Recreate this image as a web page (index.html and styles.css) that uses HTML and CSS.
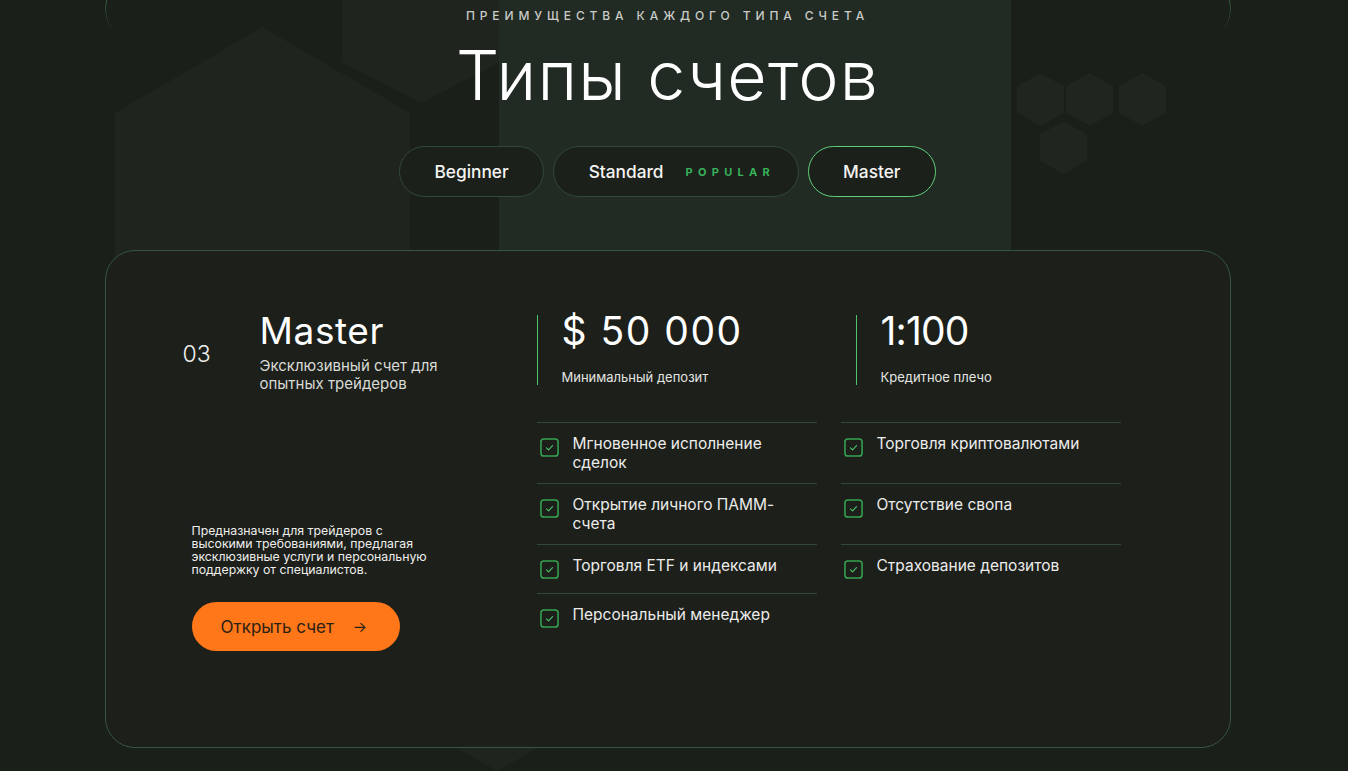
FILE: index.html
```html
<!DOCTYPE html>
<html lang="ru">
<head>
<meta charset="utf-8">
<title>Типы счетов</title>
<link rel="stylesheet" href="styles.css">
</head>
<body>
<div class="page">
  <div class="bg" aria-hidden="true">
    <div class="bg-frame"></div>
    <div class="shape house"></div>
    <div class="shape hex-top"></div>
    <div class="shape column"></div>
    <div class="shape hex hx1"></div>
    <div class="shape hex hx2"></div>
    <div class="shape hex hx3"></div>
    <div class="shape hex hx4"></div>
    <div class="shape hex-bottom"></div>
  </div>

  <section class="accounts">
    <p class="eyebrow">ПРЕИМУЩЕСТВА КАЖДОГО ТИПА СЧЕТА</p>
    <h1 class="title">Типы счетов</h1>

    <div class="tabs">
      <button class="tab">Beginner</button>
      <button class="tab tab-standard">Standard <span class="badge">POPULAR</span></button>
      <button class="tab active">Master</button>
    </div>

    <div class="card">
      <div class="card-left">
        <div class="plan-head">
          <span class="num">03</span>
          <div class="plan-name">
            <h2>Master</h2>
            <p>Эксклюзивный счет для опытных трейдеров</p>
          </div>
        </div>
        <div class="plan-foot">
          <p class="desc">Предназначен для трейдеров с высокими требованиями, предлагая эксклюзивные услуги и персональную поддержку от специалистов.</p>
          <a class="btn" href="#">Открыть счет <span class="arrow">→</span></a>
        </div>
      </div>

      <div class="card-right">
        <div class="stats">
          <div class="stat">
            <div class="stat-value stat-wide">$ 50 000</div>
            <div class="stat-label">Минимальный депозит</div>
          </div>
          <div class="stat">
            <div class="stat-value stat-tight">1:100</div>
            <div class="stat-label">Кредитное плечо</div>
          </div>
        </div>

        <ul class="features">
          <li><svg class="check" viewBox="0 0 20 20"><rect x="1" y="1" width="18" height="18" rx="3"/><path d="M6.8 10.3 L9 12.5 L13.2 8"/></svg><span>Мгновенное исполнение сделок</span></li>
          <li><svg class="check" viewBox="0 0 20 20"><rect x="1" y="1" width="18" height="18" rx="3"/><path d="M6.8 10.3 L9 12.5 L13.2 8"/></svg><span>Торговля криптовалютами</span></li>
          <li><svg class="check" viewBox="0 0 20 20"><rect x="1" y="1" width="18" height="18" rx="3"/><path d="M6.8 10.3 L9 12.5 L13.2 8"/></svg><span>Открытие личного ПАММ-счета</span></li>
          <li><svg class="check" viewBox="0 0 20 20"><rect x="1" y="1" width="18" height="18" rx="3"/><path d="M6.8 10.3 L9 12.5 L13.2 8"/></svg><span>Отсутствие свопа</span></li>
          <li><svg class="check" viewBox="0 0 20 20"><rect x="1" y="1" width="18" height="18" rx="3"/><path d="M6.8 10.3 L9 12.5 L13.2 8"/></svg><span>Торговля ETF и индексами</span></li>
          <li><svg class="check" viewBox="0 0 20 20"><rect x="1" y="1" width="18" height="18" rx="3"/><path d="M6.8 10.3 L9 12.5 L13.2 8"/></svg><span>Страхование депозитов</span></li>
          <li><svg class="check" viewBox="0 0 20 20"><rect x="1" y="1" width="18" height="18" rx="3"/><path d="M6.8 10.3 L9 12.5 L13.2 8"/></svg><span>Персональный менеджер</span></li>
        </ul>
      </div>
    </div>
  </section>
</div>
</body>
</html>
```

FILE: styles.css
```css
* { box-sizing: border-box; }

html, body {
  margin: 0;
  padding: 0;
  background: #1b1f19;
}

body {
  font-family: "Inter", "Noto Sans", "DejaVu Sans", sans-serif;
  color: #f2f2f0;
  overflow: hidden;
}

.page {
  position: relative;
  width: 1348px;
  height: 771px;
  overflow: hidden;
}

/* ---------- decorative background ---------- */
.bg {
  position: absolute;
  inset: 0;
  z-index: 0;
}

.shape {
  position: absolute;
  background: #1f241e;
}

.bg-frame {
  position: absolute;
  left: 105px;
  top: -26px;
  width: 1126px;
  height: 70px;
  border: 1px solid #3a6e48;
  border-radius: 40px;
  -webkit-mask-image: linear-gradient(to bottom, #000 0%, #000 35%, transparent 85%);
  mask-image: linear-gradient(to bottom, #000 0%, #000 35%, transparent 85%);
}

.house {
  left: 115px;
  top: 27px;
  width: 295px;
  height: 260px;
  clip-path: polygon(50% 0, 100% 33%, 100% 100%, 0 100%, 0 33%);
}

.hex-top {
  left: 342px;
  top: -60px;
  width: 158px;
  height: 163px;
  clip-path: polygon(50% 0, 100% 25%, 100% 75%, 50% 100%, 0 75%, 0 25%);
}

.column {
  left: 499px;
  top: 0;
  width: 512px;
  height: 300px;
  background: #222a24;
}

.hex {
  width: 47px;
  height: 53px;
  clip-path: polygon(50% 0, 100% 25%, 100% 75%, 50% 100%, 0 75%, 0 25%);
  background: #20251f;
}
.hx1 { left: 1017px; top: 73px; }
.hx2 { left: 1066px; top: 73px; }
.hx3 { left: 1119px; top: 73px; }
.hx4 { left: 1040px; top: 121px; }

.hex-bottom {
  left: 456px;
  top: 700px;
  width: 82px;
  height: 71px;
  clip-path: polygon(0 0, 100% 0, 100% 67.6%, 50% 100%, 0 67.6%);
}

/* ---------- content ---------- */
.accounts {
  position: relative;
  z-index: 1;
  width: 1335px;
  display: flex;
  flex-direction: column;
  align-items: center;
  padding-top: 8px;
}

.eyebrow {
  margin: 0;
  font-size: 12px;
  line-height: 16px;
  letter-spacing: 4.9px;
  color: #c9ccc7;
  font-weight: 500;
}

.title {
  margin: 17px 0 0;
  font-size: 68px;
  line-height: 68px;
  font-weight: 300;
  color: #ffffff;
  letter-spacing: 1.2px;
}

.tabs {
  display: flex;
  gap: 9px;
  margin-top: 37px;
}

.tab {
  height: 51px;
  padding: 0 34px;
  border: 1px solid #2f4a37;
  border-radius: 26px;
  background: #1c201b;
  color: #f4f4f2;
  font-family: inherit;
  font-size: 17.3px;
  font-weight: 500;
  display: flex;
  align-items: center;
  gap: 22px;
  cursor: pointer;
}

.tab-standard { padding-right: 23px; padding-left: 35px; }

.tab.active {
  border-color: #5fcf7c;
}

.badge {
  font-size: 11px;
  font-weight: 700;
  letter-spacing: 5.3px;
  color: #37b15a;
}

/* ---------- card ---------- */
.card {
  margin-top: 53px;
  width: 1126px;
  height: 498px;
  border: 1px solid #36573f;
  border-radius: 30px;
  background: #1c1f1a;
  padding: 64px 0 96px 77px;
  display: grid;
  grid-template-columns: 354px 1fr;
}

.card-left {
  display: flex;
  flex-direction: column;
}

.plan-head {
  display: flex;
  align-items: center;
}

.num {
  width: 77px;
  font-size: 23px;
  font-weight: 300;
  color: #f0f0ee;
}

.plan-name h2 {
  margin: 0;
  font-size: 37px;
  line-height: 32px;
  font-weight: 400;
  color: #ffffff;
  letter-spacing: 0.6px;
}

.plan-name p {
  margin: 10px 0 0;
  width: 200px;
  font-size: 15px;
  line-height: 18px;
  color: #d9dbd6;
}

.plan-foot {
  margin-top: auto;
  padding-left: 9px;
}

.desc {
  margin: 0;
  width: 250px;
  font-size: 12.3px;
  line-height: 13px;
  color: #eeeeec;
}

.btn {
  margin-top: 26px;
  width: 208px;
  height: 49px;
  border-radius: 25px;
  background: #ff7718;
  color: #2a2016;
  text-decoration: none;
  font-size: 17px;
  display: flex;
  align-items: center;
  padding-left: 29px;
  gap: 19px;
}

.arrow {
  font-size: 15px;
}

.stats {
  display: grid;
  grid-template-columns: 319px 319px;
}

.stat {
  border-left: 1px solid #4fc46c;
  padding-left: 24px;
  height: 70px;
}

.stat-value {
  font-size: 39px;
  line-height: 32px;
  font-weight: 400;
  color: #ffffff;
}

.stat-wide { letter-spacing: 1.5px; }
.stat-tight { letter-spacing: -0.8px; }

.stat-label {
  margin-top: 22px;
  font-size: 13px;
  line-height: 16px;
  color: #e4e5e2;
}

.features {
  list-style: none;
  margin: 37px 0 0;
  padding: 0;
  width: 584px;
  display: grid;
  grid-template-columns: 280px 280px;
  column-gap: 24px;
  align-content: start;
}

.features li {
  border-top: 1px solid #31473a;
  padding: 11px 0 11px 3px;
  display: flex;
  align-items: flex-start;
  gap: 14px;
  font-size: 15.5px;
  line-height: 19px;
  color: #ececea;
}

.check {
  flex: none;
  width: 19px;
  height: 19px;
  margin: 4px 0 3px;
  fill: none;
  stroke: #35a552;
}
.check rect { stroke-width: 1.6; }
.check path { stroke-width: 1.2; stroke: #4bc26b; stroke-linecap: round; stroke-linejoin: round; }

.features span { padding-right: 20px; }
```
